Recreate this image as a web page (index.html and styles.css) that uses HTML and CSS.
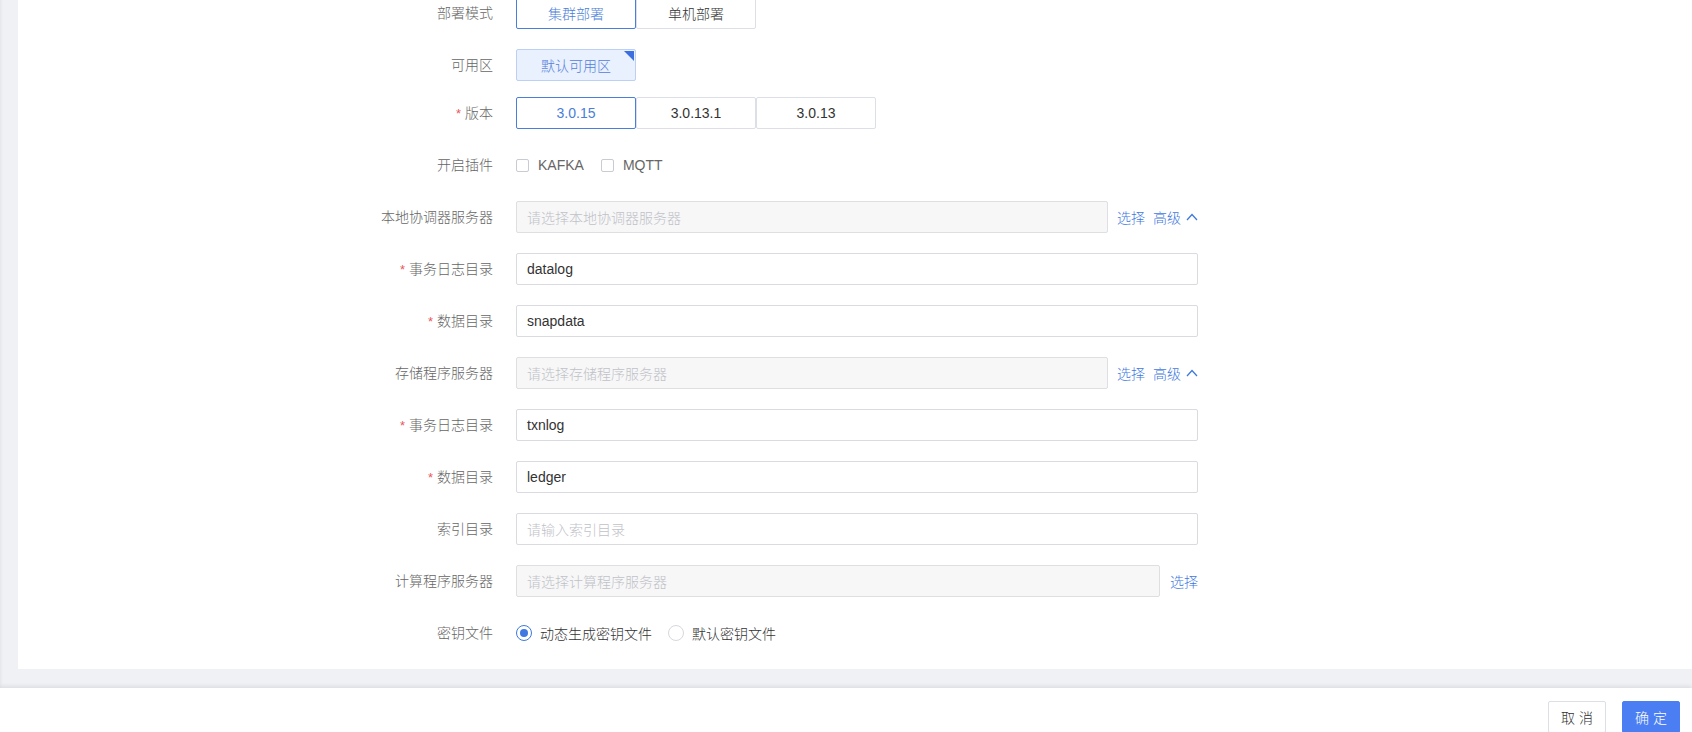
FILE: index.html
```html
<!DOCTYPE html>
<html lang="zh-CN">
<head>
<meta charset="utf-8">
<title>部署配置</title>
<link rel="stylesheet" href="styles.css">
</head>
<body>
<div class="main">
  <div class="card">
    <div class="form">
      <div class="row">
        <div class="label">部署模式</div>
        <div class="content">
          <span class="opt selected">集群部署</span><span class="opt">单机部署</span>
        </div>
      </div>
      <div class="row row-tight">
        <div class="label">可用区</div>
        <div class="content">
          <span class="opt zone">默认可用区</span>
        </div>
      </div>
      <div class="row">
        <div class="label"><span class="req">*</span>版本</div>
        <div class="content">
          <span class="opt selected">3.0.15</span><span class="opt">3.0.13.1</span><span class="opt">3.0.13</span>
        </div>
      </div>
      <div class="row">
        <div class="label">开启插件</div>
        <div class="content">
          <label class="check"><span class="box"></span>KAFKA</label>
          <label class="check"><span class="box"></span>MQTT</label>
        </div>
      </div>
      <div class="row">
        <div class="label">本地协调器服务器</div>
        <div class="content">
          <div class="input disabled placeholder">请选择本地协调器服务器</div>
          <div class="links">
            <span class="link">选择</span>
            <span class="link">高级</span>
            <svg class="chev" width="12" height="8" viewBox="0 0 12 8"><polyline points="1,7 6,1.5 11,7" fill="none" stroke="#3f78e0" stroke-width="1.3"/></svg>
          </div>
        </div>
      </div>
      <div class="row">
        <div class="label"><span class="req">*</span>事务日志目录</div>
        <div class="content"><div class="input">datalog</div></div>
      </div>
      <div class="row">
        <div class="label"><span class="req">*</span>数据目录</div>
        <div class="content"><div class="input">snapdata</div></div>
      </div>
      <div class="row">
        <div class="label">存储程序服务器</div>
        <div class="content">
          <div class="input disabled placeholder">请选择存储程序服务器</div>
          <div class="links">
            <span class="link">选择</span>
            <span class="link">高级</span>
            <svg class="chev" width="12" height="8" viewBox="0 0 12 8"><polyline points="1,7 6,1.5 11,7" fill="none" stroke="#3f78e0" stroke-width="1.3"/></svg>
          </div>
        </div>
      </div>
      <div class="row">
        <div class="label"><span class="req">*</span>事务日志目录</div>
        <div class="content"><div class="input">txnlog</div></div>
      </div>
      <div class="row">
        <div class="label"><span class="req">*</span>数据目录</div>
        <div class="content"><div class="input">ledger</div></div>
      </div>
      <div class="row">
        <div class="label">索引目录</div>
        <div class="content"><div class="input placeholder">请输入索引目录</div></div>
      </div>
      <div class="row">
        <div class="label">计算程序服务器</div>
        <div class="content">
          <div class="input disabled placeholder">请选择计算程序服务器</div>
          <div class="links links-single">
            <span class="link">选择</span>
          </div>
        </div>
      </div>
      <div class="row">
        <div class="label">密钥文件</div>
        <div class="content">
          <label class="radio"><span class="dot checked"></span>动态生成密钥文件</label>
          <label class="radio"><span class="dot"></span>默认密钥文件</label>
        </div>
      </div>
    </div>
  </div>
</div>
<div class="footer">
  <span class="btn">取消</span>
  <span class="btn primary">确定</span>
</div>
</body>
</html>
```

FILE: styles.css
```css
html, body {
  margin: 0;
  padding: 0;
}
body {
  width: 1692px;
  height: 732px;
  overflow: hidden;
  background: #ffffff;
  font-family: "Liberation Sans", "Noto Sans CJK SC", sans-serif;
  font-size: 14px;
  font-weight: 300;
  color: #333333;
}
.main {
  height: 688px;
  box-sizing: border-box;
  background: #f0f1f5;
  padding: 0 0 19px 18px;
  display: flex;
  flex-direction: column;
  justify-content: flex-end;
  overflow: hidden;
  box-shadow: inset 3px 0 3px -2px rgba(0, 0, 0, 0.06);
}
.card {
  background: #ffffff;
  padding: 0 0 20px 358px;
  flex-shrink: 0;
}
.form {
  width: 822px;
}
.row {
  display: flex;
  align-items: center;
  height: 32px;
  margin-bottom: 20px;
}
.row:last-child {
  margin-bottom: 0;
}
.row-tight {
  margin-bottom: 16px;
}
.label {
  width: 140px;
  box-sizing: border-box;
  padding-right: 23px;
  text-align: right;
  color: #666666;
  line-height: 20px;
  white-space: nowrap;
}
.req {
  color: #e9585a;
  margin-right: 4px;
  font-size: 13px;
}
.content {
  width: 682px;
  display: flex;
  align-items: center;
  height: 32px;
}
.opt {
  width: 120px;
  height: 32px;
  box-sizing: border-box;
  border: 1px solid #dcdfe6;
  border-radius: 2px;
  display: flex;
  align-items: center;
  justify-content: center;
  color: #333333;
  background: #ffffff;
}
.opt.selected {
  border-color: #4a7ed8;
  color: #4a7ed8;
}
.opt.zone {
  position: relative;
  background: #e9f0fe;
  border-color: #bccff5;
  color: #5580da;
}
.opt.zone::after {
  content: "";
  position: absolute;
  top: 1px;
  right: 1px;
  width: 0;
  height: 0;
  border-left: 10px solid transparent;
  border-top: 10px solid #3b6fe0;
}
.check {
  display: flex;
  align-items: center;
  color: #666666;
  margin-right: 17px;
}
.box {
  width: 13px;
  height: 13px;
  box-sizing: border-box;
  border: 1px solid #c8cbd2;
  border-radius: 2px;
  background: #ffffff;
  margin-right: 9px;
}
.input {
  flex: 1;
  height: 32px;
  box-sizing: border-box;
  border: 1px solid #d9dbe0;
  border-radius: 2px;
  padding: 0 10px;
  display: flex;
  align-items: center;
  color: #333333;
  background: #ffffff;
}
.input.disabled {
  background: #f7f7f7;
  border-color: #dedfe3;
}
.input.placeholder {
  color: #bfc2c8;
}
.links {
  display: flex;
  align-items: center;
  margin-left: 9px;
}
.links-single {
  margin-left: 10px;
}
.link {
  color: #3f78e0;
  margin-right: 8px;
}
.link:last-of-type {
  margin-right: 5px;
}
.links-single .link {
  margin-right: 0;
}
.chev {
  display: block;
}
.radio {
  display: flex;
  align-items: center;
  color: #333333;
  margin-right: 16px;
}
.dot {
  width: 16px;
  height: 16px;
  box-sizing: border-box;
  border: 1px solid #d6d8dd;
  border-radius: 50%;
  background: #ffffff;
  margin-right: 8px;
  display: flex;
  align-items: center;
  justify-content: center;
}
.dot.checked {
  border-color: #3f78e0;
}
.dot.checked::after {
  content: "";
  width: 8px;
  height: 8px;
  border-radius: 50%;
  background: #3f78e0;
}
.footer {
  position: relative;
  z-index: 1;
  height: 44px;
  box-sizing: border-box;
  background: #ffffff;
  box-shadow: 0 -2px 4px rgba(0, 0, 0, 0.08);
  display: flex;
  justify-content: flex-end;
  align-items: flex-start;
  padding: 13px 12px 0 0;
  gap: 16px;
}
.btn {
  width: 58px;
  height: 32px;
  box-sizing: border-box;
  border: 1px solid #dcdfe6;
  border-radius: 2px;
  background: #ffffff;
  color: #333333;
  display: flex;
  align-items: center;
  justify-content: center;
  letter-spacing: 4px;
  padding-left: 4px;
  flex-shrink: 0;
}
.btn.primary {
  background: #4b7ef2;
  border-color: #4b7ef2;
  color: #ffffff;
}
```
